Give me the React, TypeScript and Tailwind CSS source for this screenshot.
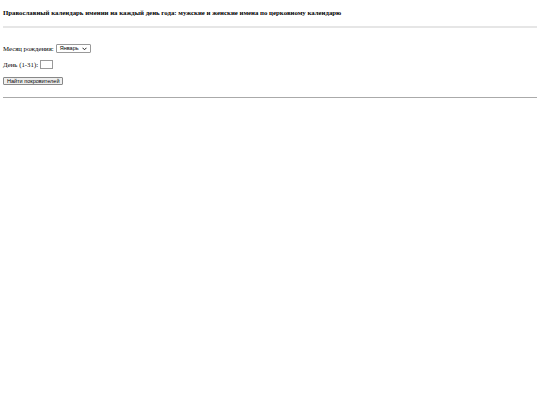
import React from 'react';

const sans = { fontFamily: '"Liberation Sans", Arial, sans-serif' };

export default function App() {
  return (
    <div className="min-h-[405px] bg-white px-[3px] font-normal text-black" style={{ fontFamily: '"Liberation Serif", "Times New Roman", serif' }}>
      <h1 className="pt-[8px] text-[6.8px] font-bold leading-[9px]">
        Православный календарь имении на каждый день года: мужские и женские имена по церковному календарю
      </h1>
      <hr className="mt-[9px] h-[2px] border-0 bg-[#e6e6e6]" />
      <form className="pt-[16px] text-[6.8px] font-normal leading-[9px]">
        <div className="flex items-center">
          <span className="font-normal">Месяц рождения:</span>
          <div className="relative ml-[2px] flex h-[9px] w-[35px] items-center rounded-[1px] border border-[#999] bg-white pl-[3px] text-[5.5px] leading-[7px]" style={sans}>
            <span>Январь</span>
            <svg className="absolute right-[3px] top-[2px]" width="5" height="4" viewBox="0 0 10 8">
              <path d="M1 1.5 L5 5.5 L9 1.5" fill="none" stroke="#222" strokeWidth="2" />
            </svg>
          </div>
        </div>
        <div className="mt-[7px] flex items-center">
          <span className="font-normal">День (1-31):</span>
          <div className="ml-[2px] h-[9px] w-[13px] border border-[#999] bg-white" />
        </div>
        <button type="button" className="mt-[8px] flex h-[8px] items-center rounded-[1px] border border-[#888] bg-[#efefef] px-[3px] text-[5.5px] leading-[6px]" style={sans}>
          Найти покровителей
        </button>
      </form>
      <hr className="mt-[12px] border-0 border-t border-[#aaa]" />
    </div>
  );
}
